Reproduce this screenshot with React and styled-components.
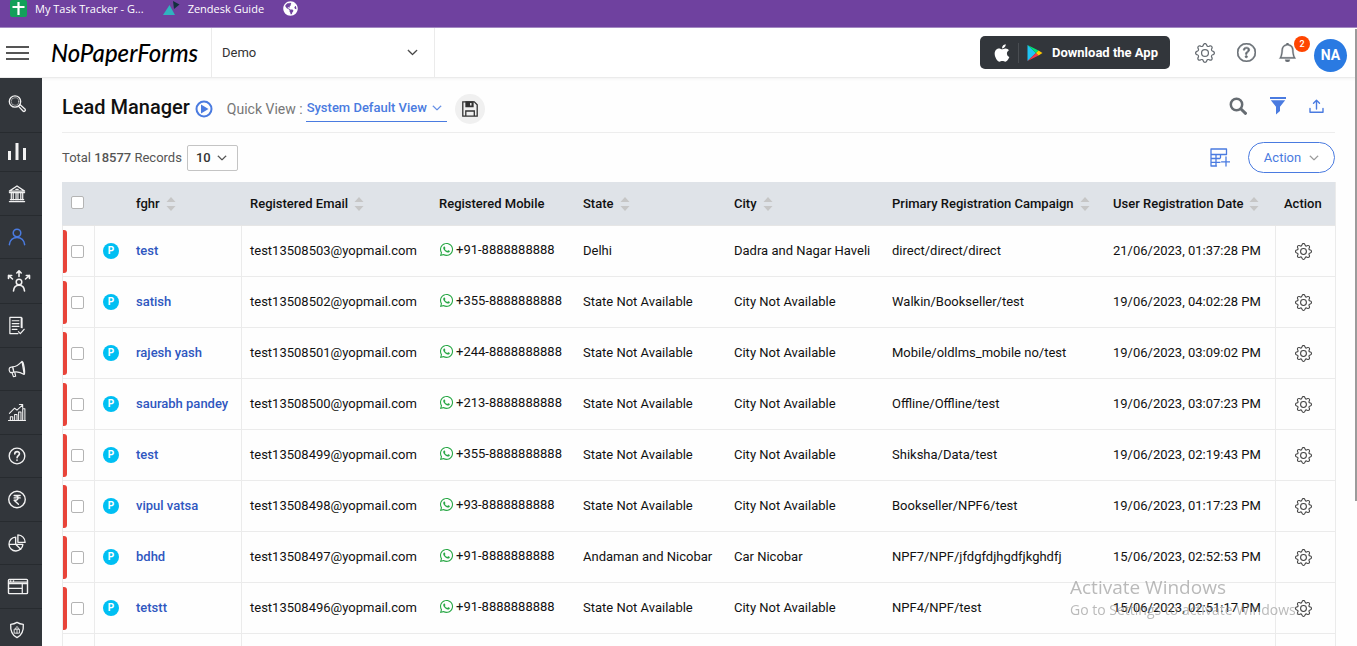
import React from 'react'
import styled, { createGlobalStyle } from 'styled-components'
import { BsGear, BsQuestionCircle, BsBell, BsChevronDown } from 'react-icons/bs'
import { FaApple, FaWhatsapp, FaGlobeAmericas } from 'react-icons/fa'

const GlobalStyle = createGlobalStyle`
  * {
    box-sizing: border-box;
  }
  body {
    margin: 0;
    background: #fefefe;
    color: #111;
    font-family: Roboto, "Liberation Sans", sans-serif;
    font-size: 13px;
  }
  button, select, input {
    font-family: inherit;
    margin: 0;
  }
`

const Page = styled.div`
  height: 100vh;
  display: flex;
  flex-direction: column;
  overflow: hidden;
`

/* bookmarks */
const Bookmarks = styled.nav`
  flex: none;
  height: 28px;
  padding: 0 10px 10px;
  display: flex;
  align-items: center;
  gap: 19px;
  background: #6f419f;
  border-bottom: 1px solid #a58bc4;
`
const Bookmark = styled.a`
  display: flex;
  align-items: center;
  gap: 8px;
  color: #fff;
  font-family: "Open Sans", "Noto Sans", sans-serif;
  font-size: 11px;
  font-weight: 500;
  line-height: 16px;
  text-decoration: none;
`

/* header */
const Header = styled.header`
  flex: none;
  height: 50px;
  display: flex;
  align-items: center;
  justify-content: space-between;
  padding: 0 10px 0 6px;
  background: #fff;
  border-bottom: 1px solid #ebebeb;
  box-shadow: 0 1px 3px rgba(0, 0, 0, 0.05);
`
const HeaderGroup = styled.div`
  display: flex;
  align-items: center;
  align-self: stretch;
  gap: ${props => props.$gap || 0}px;
`
const IconButton = styled.button`
  display: flex;
  padding: 0;
  border: 0;
  background: none;
  color: ${props => props.$color || '#666c72'};
  cursor: pointer;
`
const Logo = styled.a`
  width: 160px;
  margin-left: 22px;
  color: #000;
  font-family: Lato, sans-serif;
  font-size: 24px;
  font-style: italic;
  font-weight: 500;
  line-height: 40px;
  text-decoration: none;
`
const SelectBox = styled.div`
  display: grid;
  align-items: center;
  svg {
    grid-area: 1 / 1;
    justify-self: end;
    pointer-events: none;
  }
`
const Select = styled.select`
  grid-area: 1 / 1;
  width: 100%;
  padding: 0;
  border: 0;
  outline: 0;
  appearance: none;
  background: none;
  color: inherit;
  font-size: inherit;
  font-weight: inherit;
`
const CollegeSelect = styled(SelectBox)`
  align-self: stretch;
  width: 224px;
  padding: 0 16px 0 10px;
  border: solid #ebebeb;
  border-width: 0 1px;
  color: #333;
`
const DownloadButton = styled.button`
  display: flex;
  align-items: center;
  height: 33px;
  margin-right: 3px;
  padding: 0 12px;
  border: 0;
  border-radius: 5px;
  background: #32363b;
  color: #fff;
  font-size: 13px;
  font-weight: 700;
  svg:last-of-type {
    margin: 0 9px 0 8px;
  }
`
const DownloadLine = styled.span`
  width: 1px;
  height: 20px;
  margin-left: 6px;
  background: #494d52;
`
const BellWrap = styled.div`
  position: relative;
  margin-right: -5px;
`
const Badge = styled.span`
  position: absolute;
  top: -7px;
  right: -13px;
  width: 16px;
  border-radius: 50%;
  background: #ff4500;
  color: #fff;
  font-size: 9px;
  font-weight: 500;
  line-height: 16px;
  text-align: center;
`
const Avatar = styled.button`
  width: 33px;
  height: 33px;
  margin-top: 5px;
  padding: 0;
  border: 0;
  border-radius: 50%;
  background: #2a7ae2;
  color: #fff;
  font-size: 14px;
  font-weight: 700;
`

/* body */
const Body = styled.div`
  flex: 1;
  min-height: 0;
  display: flex;
`
const Sidebar = styled.nav`
  flex: none;
  width: 42px;
  overflow: hidden;
  background: #32363b;
`
const SideItem = styled.a`
  display: flex;
  align-items: center;
  padding: ${props => props.$pad || '12px'} 0 ${props => props.$padBottom || props.$pad || '12px'} 7px;
  border-bottom: 1px solid #272b2f;
  color: ${props => (props.$active ? '#4a7be0' : '#f2f2f2')};
`
const Main = styled.main`
  flex: 1;
  min-width: 0;
  padding: 0 22px 0 20px;
  overflow: hidden;
`
const TitleRow = styled.div`
  display: flex;
  align-items: center;
  justify-content: space-between;
  height: 55px;
  padding: 8px 11px 0 0;
  border-bottom: 1px solid #ededed;
`
const TitleTools = styled(HeaderGroup)`
  padding-bottom: 6px;
`
const Title = styled.h1`
  margin: 0 5px 4px 0;
  color: #111;
  font-size: 20px;
  font-weight: 500;
  line-height: 24px;
`
const QuickLabel = styled.label`
  margin: 0 3px 0 14px;
  color: #777;
  font-size: 14px;
`
const QuickSelect = styled(SelectBox)`
  width: 141px;
  height: 26px;
  padding: 0 5px 2px 1px;
  border-bottom: 1px solid #4a7be0;
  color: #4a7be0;
  font-weight: 500;
`
const SaveButton = styled.button`
  display: flex;
  align-items: center;
  justify-content: center;
  width: 30px;
  height: 30px;
  margin-left: 8px;
  padding: 0;
  border: 0;
  border-radius: 50%;
  background: #f0f0f0;
`
const RecordsRow = styled.div`
  display: flex;
  align-items: center;
  justify-content: space-between;
  height: 49px;
  color: #555;
`
const LeadCount = styled.b`
  font-weight: 500;
`
const PageSize = styled(SelectBox)`
  width: 51px;
  height: 26px;
  margin-left: 5px;
  padding: 0 10px 0 8px;
  border: 1px solid #c4c4c4;
  border-radius: 2px;
  color: #333;
  font-weight: 500;
`
const ActionButton = styled.button`
  display: flex;
  align-items: center;
  justify-content: center;
  gap: 8px;
  width: 87px;
  height: 31px;
  padding: 0;
  border: 1px solid #4a7be0;
  border-radius: 16px;
  background: #fff;
  color: #4a7be0;
  font-size: 13px;
`

/* table */
const Table = styled.table`
  width: 100%;
  table-layout: fixed;
  border-collapse: separate;
  border-spacing: 0;
  border-right: 1px solid #ebebeb;
`
const Th = styled.th`
  height: 44px;
  padding: 0 8px;
  border-bottom: 1px solid #e6e6e6;
  background: #dfe3e8;
  font-size: 13px;
  font-weight: 500;
  text-align: left;
  white-space: nowrap;
`
const Td = styled.td`
  height: 51px;
  padding: 0 8px 2px;
  border-bottom: 1px solid #ebebeb;
  border-right: ${props => (props.$line ? '1px solid #ebebeb' : '0')};
  white-space: nowrap;
`
const CheckTh = styled(Th)`
  padding: 0 0 2px 9px;
`
const CheckTd = styled(Td)`
  padding: 0;
  border-left: 1px solid #ebebeb;
`
const PublisherTd = styled(Td)`
  padding: 0 8px;
`
const ActionTd = styled(Td)`
  padding: 0 19px;
`
const CheckWrap = styled.div`
  display: flex;
  align-items: center;
  gap: 4px;
`
const RedBar = styled.span`
  width: 4px;
  height: 43px;
  border-radius: 0 3px 3px 0;
  background: #e8443a;
`
const Checkbox = styled.input.attrs({ type: 'checkbox' })`
  display: block;
  width: 13px;
  height: 13px;
  border: 1px solid #b4b4b4;
  border-radius: 2px;
  appearance: none;
  background: #fff;
`
const SortButton = styled(IconButton)`
  display: inline-flex;
  margin-left: 6px;
  vertical-align: middle;
`
const Publisher = styled.span`
  display: block;
  width: 16px;
  border-radius: 50%;
  background: #00bff3;
  color: #fff;
  font-size: 10px;
  font-weight: 700;
  line-height: 16px;
  text-align: center;
`
const LeadLink = styled.a`
  color: #2f57c0;
  font-weight: 500;
  text-decoration: none;
`
const Mobile = styled.div`
  display: flex;
  align-items: center;
  gap: 2px;
  padding-bottom: 2px;
  svg {
    color: #28a745;
  }
`

const Watermark = styled.div`
  position: fixed;
  right: 46px;
  bottom: 26px;
  width: 241px;
  color: rgba(140, 140, 140, 0.6);
  font-family: "Open Sans", "Noto Sans", sans-serif;
  font-size: 14px;
  line-height: 20px;
  white-space: nowrap;
  pointer-events: none;
`
const WatermarkTitle = styled.div`
  font-size: 19px;
  line-height: 26px;
`
const ScrollThumb = styled.div`
  position: fixed;
  top: 29px;
  right: 0;
  width: 2px;
  height: 73vh;
  background: #9b9b9b;
`

const Chevron = ({ size = 10, color }) => <BsChevronDown size={size} color={color} strokeWidth={1} />

const Line = ({ w = 20, h = 20, vb = '0 0 20 20', sw = 1.3, children }) => (
  <svg width={w} height={h} viewBox={vb} fill="none" stroke="currentColor" strokeWidth={sw} strokeLinecap="round" strokeLinejoin="round" aria-hidden="true">
    {children}
  </svg>
)

const SortIcon = () => (
  <svg width="10" height="14" viewBox="0 0 10 14" fill="#c6c6c6" aria-hidden="true">
    <path d="M5 0l4.5 5h-9zM5 14l4.500-5h-9z" />
  </svg>
)

const menu = [
  { name: 'Search', pad: '16px', padBottom: '18px', h: 20, icon: <><circle cx="8" cy="7.500" r="5.700" /><circle cx="8" cy="7.500" r="3.800" strokeWidth=".5" /><path d="M12 11.500l1.200-.8 5 4.600c.8 1-.9 2.800-2 1.900l-4.600-4.800z" /></> },
  { name: 'Dashboard', pad: '9px', h: 20, icon: <path d="M2.500 9v9M10 1v17M17.500 6v12" strokeWidth="3" strokeLinecap="butt" /> },
  { name: 'Institute', h: 19, icon: <><path d="M2 7.500L10 2l8 5.500zM2 9h16M3 16.500h14M2 18.500h16M8.800 5.700h2.400" /><path d="M4 9v7.500M6 9v7.500M9 9v7.500M11 9v7.500M14 9v7.500M16 9v7.500" /></> },
  { name: 'Leads', h: 18, active: true, icon: <><circle cx="10" cy="5.500" r="4.200" strokeWidth="1.700" /><path d="M1.500 18.500c.5-5 4-8 8.500-8s8 3 8.500 8" strokeWidth="1.700" /></> },
  { name: 'Allocation', pad: '10px', h: 24, w: 24, vb: '0 0 24 22', icon: <><circle cx="12" cy="12" r="2.800" strokeWidth="1.500" /><path d="M6.500 21c.3-3.500 2.300-5.700 5.500-5.700s5.200 2.200 5.500 5.700M12 6.500V1M9.800 3L12 .8 14.200 3M5.500 9L1.500 5.500M1.500 8.500v-3h3.200M18.500 9l4-3.500M19.300 5.500h3.200v3" strokeWidth="1.600" /></> },
  { name: 'Applications', h: 19, icon: <><path d="M14.500 12V1.500h-12v17H11M14.500 1.500l.8.8v10M5 5h7M5 8h7M5 11h7M5 14h5M11.500 16.500l2 2 4-4.500" /></> },
  { name: 'Campaigns', h: 18, icon: <><path d="M5 7.500c3.500 0 7-2 10.500-6l2.500 14.500c-4-2.500-8-3.500-11.500-2.500zM5 7.500L2 8.500c-1.500 1.500-.5 5 1 5.500l3.500-.5M4.500 14l1.500 4.500 2.500-.5-1-4.500M15.500 1.500c2-.3 3.800 13 2.500 14.500M5.500 8l1 5.500" /></> },
  { name: 'Reports', h: 19, icon: <><path d="M1 18.500h18M3 18.500v-4h2.500v4M7.500 18.500V12H10v6.500M11.700 18.500V9.500h2.500v9M16 18.500V6h2.300v12.500M2 11l5.500-5.500 2.500 2L16 2M12.500 1.500H16V5" strokeWidth="1.100" /></> },
  { name: 'Queries', h: 18, icon: <><circle cx="10" cy="10" r="8.700" strokeWidth="1.500" /><path d="M7.500 7.800C7.500 4.300 12.700 4.300 12.700 7.500c0 2-2.600 2.200-2.600 4.500M10 14.500v.3" strokeWidth="1.800" /></> },
  { name: 'Payments', h: 19, icon: <><circle cx="10" cy="10" r="8.700" strokeWidth="1.500" /><path d="M7 5.800h6.300M7 8.300h6.300M7 5.800c5.500 0 5.500 5 0 5l4.500 4.200" strokeWidth="1.500" /></> },
  { name: 'Analytics', h: 18, icon: <><path d="M8.500 3.500a7.700 7.700 0 1 0 8 8h-8zM8.500 11.500l5.700 5.500M11 1v8.300h8A8.200 8.200 0 0 0 11 1zM8.500 11.500H1" strokeWidth="1.500" /></> },
  { name: 'Portal', h: 19, w: 22, vb: '0 0 22 20', icon: <><rect x="1" y="2.500" width="20" height="15" rx="1" strokeWidth="1.500" /><path d="M1 5.500h20M1 7h20M15.500 7v10M1 12h14.500M3 4h.5M6 4h.5" /></> },
  { name: 'Security', h: 18, icon: <><path d="M10 1.500c2.500 1.500 4.500 2 7 2.200.5 7-1.500 12-7 14.800C4.500 15.700 2.500 10.700 3 3.700c2.500-.2 4.500-.7 7-2.200z" strokeWidth="1.500" /><path d="M7.300 9h5.400v4.500H7.300zM8.300 9c0-3.500 3.400-3.500 3.400 0M10 9v4.500" strokeWidth="1" /></> },
]

const columns = [
  { label: 'Registered Email', sort: true },
  { label: 'Registered Mobile' },
  { label: 'State', sort: true },
  { label: 'City', sort: true },
  { label: 'Primary Registration Campaign', sort: true },
  { label: 'User Registration Date', sort: true },
]

const widths = [33, 33, 114, 189, 144, 151, 158, 221, 171, 59]

const noState = 'State Not Available'
const noCity = 'City Not Available'
const leads = [
  { id: 13508503, name: 'test', mobile: '+91-8888888888', state: 'Delhi', city: 'Dadra and Nagar Haveli', campaign: 'direct/direct/direct', date: '21/06/2023, 01:37:28 PM' },
  { id: 13508502, name: 'satish', mobile: '+355-8888888888', state: noState, city: noCity, campaign: 'Walkin/Bookseller/test', date: '19/06/2023, 04:02:28 PM' },
  { id: 13508501, name: 'rajesh yash', mobile: '+244-8888888888', state: noState, city: noCity, campaign: 'Mobile/oldlms_mobile no/test', date: '19/06/2023, 03:09:02 PM' },
  { id: 13508500, name: 'saurabh pandey', mobile: '+213-8888888888', state: noState, city: noCity, campaign: 'Offline/Offline/test', date: '19/06/2023, 03:07:23 PM' },
  { id: 13508499, name: 'test', mobile: '+355-8888888888', state: noState, city: noCity, campaign: 'Shiksha/Data/test', date: '19/06/2023, 02:19:43 PM' },
  { id: 13508498, name: 'vipul vatsa', mobile: '+93-8888888888', state: noState, city: noCity, campaign: 'Bookseller/NPF6/test', date: '19/06/2023, 01:17:23 PM' },
  { id: 13508497, name: 'bdhd', mobile: '+91-8888888888', state: 'Andaman and Nicobar', city: 'Car Nicobar', campaign: 'NPF7/NPF/jfdgfdjhgdfjkghdfj', date: '15/06/2023, 02:52:53 PM' },
  { id: 13508496, name: 'tetstt', mobile: '+91-8888888888', state: noState, city: noCity, campaign: 'NPF4/NPF/test', date: '15/06/2023, 02:51:17 PM' },
]

const BookmarkBar = () => (
  <Bookmarks>
    <Bookmark href="#tracker">
      <svg width="17" height="17" viewBox="0 0 17 17" aria-hidden="true">
        <rect width="17" height="17" rx="2" fill="#13a05a" />
        <path d="M8.500 2v13M2.500 7h12" stroke="#fff" strokeWidth="2.200" />
      </svg>
      My Task Tracker - G...
    </Bookmark>
    <Bookmark href="#zendesk">
      <svg width="17" height="15" viewBox="0 0 17 15" aria-hidden="true">
        <path d="M0 14L6.500 4 12 14z" fill="#2fb3bf" />
        <path d="M10 0l6.500 3.500L11 8z" fill="#12303e" />
      </svg>
      Zendesk Guide
    </Bookmark>
    <Bookmark href="#web" aria-label="Web">
      <FaGlobeAmericas size={15} />
    </Bookmark>
  </Bookmarks>
)

const TopBar = () => (
  <Header>
    <HeaderGroup>
      <IconButton aria-label="Menu">
        <svg width="23" height="16" viewBox="0 0 23 16" stroke="#555" strokeWidth="2" aria-hidden="true">
          <path d="M0 2h23M0 8h23M0 14h23" />
        </svg>
      </IconButton>
      <Logo href="#home">NoPaperForms</Logo>
      <CollegeSelect>
        <Select aria-label="College" defaultValue="Demo">
          <option>Demo</option>
        </Select>
        <Chevron size={11} />
      </CollegeSelect>
    </HeaderGroup>
    <HeaderGroup $gap={22}>
      <DownloadButton>
        <FaApple size={20} />
        <DownloadLine />
        <svg width="16" height="18" viewBox="0 0 16 18" aria-hidden="true">
          <path d="M.5 1v16L9 9z" fill="#20c4f4" />
          <path d="M.5 1L9 9l2.500-2.500z" fill="#00e676" />
          <path d="M.5 17L9 9l2.500 2.500z" fill="#f4364c" />
          <path d="M11.500 6.500L15.500 9l-4 2.500L9 9z" fill="#ffc800" />
        </svg>
        Download the App
      </DownloadButton>
      <IconButton aria-label="Settings"><BsGear size={20} /></IconButton>
      <IconButton aria-label="Help"><BsQuestionCircle size={19} strokeWidth={0.5} /></IconButton>
      <BellWrap>
        <IconButton aria-label="Notifications"><BsBell size={19} strokeWidth={0.3} /></IconButton>
        <Badge>2</Badge>
      </BellWrap>
      <Avatar>NA</Avatar>
    </HeaderGroup>
  </Header>
)

const TitleBar = () => (
  <TitleRow>
    <HeaderGroup>
      <Title>Lead Manager</Title>
      <IconButton $color="#4a7be0" aria-label="Play video">
        <svg width="18" height="18" viewBox="0 0 18 18" aria-hidden="true">
          <circle cx="9" cy="9" r="7.500" fill="none" stroke="currentColor" strokeWidth="2" />
          <path d="M6 4.500L13.500 9 6 13.500z" fill="currentColor" />
        </svg>
      </IconButton>
      <QuickLabel htmlFor="quick-view">Quick View :</QuickLabel>
      <QuickSelect>
        <Select id="quick-view" defaultValue="System Default View">
          <option>System Default View</option>
        </Select>
        <Chevron />
      </QuickSelect>
      <SaveButton aria-label="Save view">
        <svg width="16" height="16" viewBox="0 0 16 16" fill="none" stroke="#333" strokeWidth="1.300" aria-hidden="true">
          <path d="M.8.8h11.500l2.900 3v11.400H.8zM3.800 15V10h8.500v5" />
          <path d="M4 1h7v4.500H4z" fill="#333" />
          <path d="M8.800 2v2.500" stroke="#fff" />
        </svg>
      </SaveButton>
    </HeaderGroup>
    <TitleTools $gap={23}>
      <IconButton aria-label="Search leads">
        <Line w={18} h={18} vb="0 0 18 18" sw={2.5}><circle cx="7.500" cy="7.500" r="5.700" /><path d="M12 12l4.500 4.300" strokeWidth="3" /></Line>
      </IconButton>
      <IconButton $color="#4a7be0" aria-label="Filter">
        <svg width="16" height="18" viewBox="0 0 16 18" fill="currentColor" aria-hidden="true">
          <path d="M0 0h16v2H0zM.8 3.200h14.400L10 9.800V14l-4 3.500V9.800z" />
        </svg>
      </IconButton>
      <IconButton $color="#4a7be0" aria-label="Export">
        <Line w={15} h={15} vb="0 0 15 15" sw={1.4}><path d="M1 9.500v3.800h13V9.500M7.500 10V1.500M4.500 4.300l3-3 3 3" /></Line>
      </IconButton>
    </TitleTools>
  </TitleRow>
)

const Records = () => (
  <RecordsRow>
    <HeaderGroup>
      <span>Total <LeadCount>18577</LeadCount> Records</span>
      <PageSize>
        <Select aria-label="Records per page" defaultValue="10">
          <option>10</option>
        </Select>
        <Chevron />
      </PageSize>
    </HeaderGroup>
    <HeaderGroup $gap={18}>
      <IconButton $color="#4a7be0" aria-label="Add column">
        <Line w={20} h={19} vb="0 0 20 19" sw={1.3}>
          <path d="M6.500 18H1V1h15.500v5.500H1M6 6.500V18M1 10.500h9M1 14.300h9M10.500 6.500v3M16 9v9M11.500 13.800h8.500" />
        </Line>
      </IconButton>
      <ActionButton>Action <Chevron color="#888" /></ActionButton>
    </HeaderGroup>
  </RecordsRow>
)

const SortableTh = ({ label, sort }) => (
  <Th scope="col">
    {label}
    {sort && <SortButton aria-label={'Sort by ' + label}><SortIcon /></SortButton>}
  </Th>
)

const LeadRow = ({ lead }) => (
  <tr>
    <CheckTd $line>
      <CheckWrap>
        <RedBar />
        <Checkbox aria-label={'Select ' + lead.name} />
      </CheckWrap>
    </CheckTd>
    <PublisherTd><Publisher>P</Publisher></PublisherTd>
    <Td $line><LeadLink href={'#' + lead.id}>{lead.name}</LeadLink></Td>
    <Td>test{lead.id}@yopmail.com</Td>
    <Td><Mobile><FaWhatsapp size={15} />{lead.mobile}</Mobile></Td>
    <Td>{lead.state}</Td>
    <Td>{lead.city}</Td>
    <Td>{lead.campaign}</Td>
    <Td $line>{lead.date}</Td>
    <ActionTd>
      <IconButton $color="#444" aria-label="Lead actions"><BsGear size={17} /></IconButton>
    </ActionTd>
  </tr>
)

const App = () => {
  return (
    <Page>
      <GlobalStyle />
      <BookmarkBar />
      <TopBar />
      <Body>
        <Sidebar>
          {menu.map(item => (
            <SideItem key={item.name} href={'#' + item.name} aria-label={item.name} $active={item.active} $pad={item.pad} $padBottom={item.padBottom}>
              <Line w={item.w} h={item.h} vb={item.vb}>{item.icon}</Line>
            </SideItem>
          ))}
        </Sidebar>
        <Main>
          <TitleBar />
          <Records />
          <Table>
            <colgroup>
              {widths.map((w, i) => <col key={i} width={w} />)}
            </colgroup>
            <thead>
              <tr>
                <CheckTh><Checkbox aria-label="Select all" /></CheckTh>
                <Th />
                <SortableTh label="fghr" sort />
                {columns.map(c => <SortableTh key={c.label} {...c} />)}
                <SortableTh label="Action" />
              </tr>
            </thead>
            <tbody>
              {leads.map(lead => <LeadRow key={lead.id} lead={lead} />)}
              <tr>
                <CheckTd $line />
                <Td />
                <Td $line />
                <Td colSpan={6} $line />
                <Td />
              </tr>
            </tbody>
          </Table>
        </Main>
      </Body>
      <Watermark>
        <WatermarkTitle>Activate Windows</WatermarkTitle>
        Go to Settings to activate Windows.
      </Watermark>
      <ScrollThumb />
    </Page>
  )
}

export default App
